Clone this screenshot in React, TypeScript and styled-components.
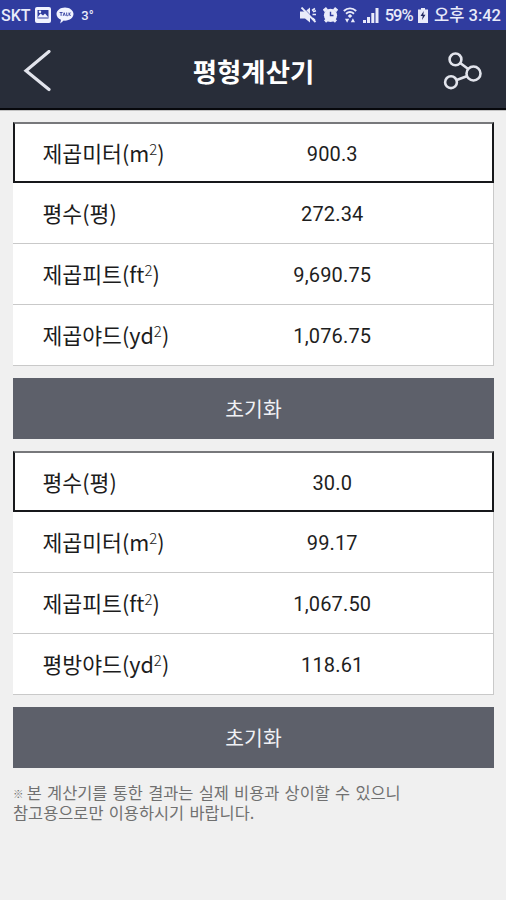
import React from 'react';
import styled, { createGlobalStyle } from 'styled-components';

const GlobalStyle = createGlobalStyle`
  * { box-sizing: border-box; }
  body {
    margin: 0;
    background: #f0f0f0;
    font-family: Roboto, 'Noto Sans CJK KR', sans-serif;
  }
`;

const Screen = styled.div`
  width: 506px;
  height: 900px;
  overflow: hidden;
  background: #f0f0f0;
`;

const StatusBar = styled.div`
  height: 30px;
  padding: 0 5px 0 1px;
  display: flex;
  align-items: center;
  justify-content: space-between;
  background: #303c9f;
  color: #e9ebfa;
  white-space: nowrap;
`;

const StatusGroup = styled.div<{ $gap: number }>`
  display: flex;
  align-items: center;
  gap: ${({ $gap }) => $gap}px;
  svg { display: block; flex: none; }
`;

const StatusText = styled.span<{ $size?: number; $spacing?: number }>`
  font-size: ${({ $size = 16.5 }) => $size}px;
  font-weight: 500;
  letter-spacing: ${({ $spacing = 0 }) => $spacing}px;
  line-height: 30px;
  padding-top: 1px;
`;

const Header = styled.header`
  height: 80px;
  padding: 3px 21px 0 23px;
  display: grid;
  grid-template-columns: 42px 1fr 42px;
  align-items: center;
  background: #282d39;
  border-bottom: 2px solid #07080c;
  box-shadow: 0 1px 0 #c2c2c2;
  svg { display: block; }
`;

const Title = styled.h1`
  margin: 0;
  padding-right: 1px;
  text-align: center;
  color: #fff;
  font: 700 26.4px/36px 'Noto Sans CJK KR', sans-serif;
`;

const IconButton = styled.button`
  padding: 0;
  border: 0;
  background: none;
  color: #e2e4ec;
`;

const Content = styled.main`
  padding: 12px 12px 0 13px;
  display: flex;
  flex-direction: column;
  gap: 12px;
`;

const Card = styled.section`
  height: 244px;
  display: grid;
  grid-template-rows: repeat(4, 61px);
  background: #fff;
`;

const Row = styled.div<{ $active?: boolean }>`
  display: grid;
  grid-template-columns: 164px 1fr;
  align-items: center;
  padding-left: ${({ $active }) => ($active ? 27.5 : 29.5)}px;
  border: 0 solid #c9c9c9;
  border-width: 0 1px 1px 0;
  ${({ $active }) =>
    $active && 'border: 2px solid #17181b; border-top-color: #77787b;'}
`;

const Label = styled.span`
  color: #1c1c1c;
  font: 400 21.6px/30px 'Noto Sans CJK KR', sans-serif;
  white-space: nowrap;
`;

const Power = styled.sup`
  font-size: 15px;
  font-weight: 300;
  line-height: 0;
  vertical-align: 7px;
`;

const Value = styled.span<{ $active?: boolean }>`
  color: #1e1e1e;
  font-size: 20px;
  line-height: 28px;
  letter-spacing: 0.15px;
  text-align: center;
  padding: 2px ${({ $active }) => ($active ? 34 : 35)}px 0 0;
`;

const ResetButton = styled.button`
  height: 61px;
  border: 0;
  padding: 0 0 2px;
  background: #5d606a;
  color: #f0f1f5;
  font: 400 20.4px/30px 'Noto Sans CJK KR', sans-serif;
`;

const Note = styled.p`
  margin: 2px 0 0;
  color: #707070;
  font: 400 16.4px/20px 'Noto Sans CJK KR', sans-serif;
  word-spacing: 1.6px;
  white-space: nowrap;
`;

const NoteMark = styled.span`
  font-size: 10.5px;
  line-height: 0;
  vertical-align: 1px;
  margin-right: -2px;
`;

interface Measure {
  name: string;
  unit: string;
  squared?: boolean;
  value: string;
}

const fromMeters: Measure[] = [
  { name: '제곱미터', unit: 'm', squared: true, value: '900.3' },
  { name: '평수', unit: '평', value: '272.34' },
  { name: '제곱피트', unit: 'ft', squared: true, value: '9,690.75' },
  { name: '제곱야드', unit: 'yd', squared: true, value: '1,076.75' },
];

const fromPyeong: Measure[] = [
  { name: '평수', unit: '평', value: '30.0' },
  { name: '제곱미터', unit: 'm', squared: true, value: '99.17' },
  { name: '제곱피트', unit: 'ft', squared: true, value: '1,067.50' },
  { name: '평방야드', unit: 'yd', squared: true, value: '118.61' },
];

const PictureIcon = () => (
  <svg width="16" height="16" viewBox="0 0 16 16">
    <rect width="16" height="16" rx="2" fill="#f1f3ff" />
    <path d="M2.500 3h11v8.500h-11z" fill="#303c9f" />
    <path d="M2.500 10.500l3-4 2.500 2 2-2 3.500 4z" fill="#f1f3ff" />
    <circle cx="5" cy="4.800" r="1.200" fill="#f1f3ff" />
  </svg>
);

const TalkIcon = () => (
  <svg width="18" height="17" viewBox="0 0 18 17">
    <path d="M9 .5c4.700 0 8.500 2.900 8.500 6.600S13.700 13.700 9 13.700l-1.300-.1L4.200 16.500l.8-3.700C2.300 11.700.5 9.600.5 7.100.5 3.400 4.300.5 9 .5z" fill="#f1f3ff" />
    <path d="M3.600 5.500h3M5.100 5.500v3.400M7.200 8.900l1-3.200 1.100 3.200M10.700 5.500v3.200h1.200M13 5.500v3.400M14.500 5.600L13.300 7l1.300 1.800" fill="none" stroke="#303c9f" strokeWidth=".9" />
  </svg>
);

const MuteIcon = () => (
  <svg width="17" height="16" viewBox="0 0 17 16">
    <path d="M0 4.500h5l5-4v15l-5-4H0z" fill="currentColor" />
    <path d="M3 .5l13 13.500" stroke="#303c9f" strokeWidth="1" />
    <path d="M1.500 .5l14 14.500" stroke="currentColor" strokeWidth="1.800" />
    <path d="M12 3.500l3-2M12.500 7.500H16M13 4.800l3-1M12.500 11l2.500 2" stroke="currentColor" strokeWidth="1.600" />
  </svg>
);

const AlarmIcon = () => (
  <svg width="15" height="16" viewBox="0 0 15 16">
    <path d="M.8 4L4 1.200M14.200 4L11 1.200M2 14.500l3-2.500M13 14.500l-3-2.500" stroke="currentColor" strokeWidth="3.200" />
    <circle cx="7.500" cy="8.300" r="6.600" fill="currentColor" />
    <path d="M7.500 4.800v3.700h3" fill="none" stroke="#303c9f" strokeWidth="1.400" />
  </svg>
);

const WifiIcon = () => (
  <svg width="14" height="16" viewBox="0 0 14 16">
    <path d="M.8 4c3.700-3.300 8.700-3.300 12.400 0M3 6.700c2.500-2.100 5.500-2.100 8 0" fill="none" stroke="currentColor" strokeWidth="1.900" />
    <path d="M7 7l2.300 2L7 11 4.700 9zM2 11.700h4.200L4.100 15.800zM7.800 15.300H12l-2.100-4.100z" fill="currentColor" />
  </svg>
);

const SignalIcon = () => (
  <svg width="16" height="15" viewBox="0 0 16 15">
    <path d="M0 12h3v3H0zM4 9h3v6H4zM8.300 5h3v10h-3zM12.500 0h3v15h-3z" fill="currentColor" />
  </svg>
);

const BatteryIcon = () => (
  <svg width="10" height="15" viewBox="0 0 10 15">
    <path d="M3 0h4v1.500h3V15H0V1.500h3z" fill="currentColor" />
    <path d="M5.800 3L2.500 8h2.200L4 12l3.500-5.300H5.300z" fill="#20275f" />
  </svg>
);

const BackIcon = () => (
  <svg width="30" height="42" viewBox="0 0 30 42">
    <path d="M26 1.500L3 20.700 26 39.500" fill="none" stroke="currentColor" strokeWidth="3.200" strokeLinecap="round" />
  </svg>
);

const ShareIcon = () => (
  <svg width="40" height="38" viewBox="0 0 40 38">
    <g fill="none" stroke="currentColor" strokeWidth="2.600">
      <circle cx="12.500" cy="7.400" r="5.900" />
      <circle cx="30.500" cy="21.500" r="7" />
      <circle cx="8" cy="30.200" r="5.900" />
      <path d="M17.200 11l8 6M13.700 28l10-3.800" />
    </g>
  </svg>
);

const Converter = ({ rows }: { rows: Measure[] }) => (
  <>
    <Card>
      {rows.map((row, index) => (
        <Row key={row.name} $active={index === 0}>
          <Label>
            {row.name}({row.unit}
            {row.squared && <Power>2</Power>})
          </Label>
          <Value $active={index === 0}>{row.value}</Value>
        </Row>
      ))}
    </Card>
    <ResetButton>초기화</ResetButton>
  </>
);

export default function App() {
  return (
    <Screen>
      <GlobalStyle />
      <StatusBar>
        <StatusGroup $gap={4.5}>
          <StatusText $size={16}>SKT</StatusText>
          <PictureIcon />
          <TalkIcon />
          <StatusText $size={13}>&nbsp;3°</StatusText>
        </StatusGroup>
        <StatusGroup $gap={5.6}>
          <MuteIcon />
          <AlarmIcon />
          <WifiIcon />
          <SignalIcon />
          <StatusText $spacing={-0.9}>59%</StatusText>
          <BatteryIcon />
          <StatusText>오후 3:42</StatusText>
        </StatusGroup>
      </StatusBar>
      <Header>
        <IconButton aria-label="뒤로"><BackIcon /></IconButton>
        <Title>평형계산기</Title>
        <IconButton aria-label="공유"><ShareIcon /></IconButton>
      </Header>
      <Content>
        <Converter rows={fromMeters} />
        <Converter rows={fromPyeong} />
        <Note>
          <NoteMark>※</NoteMark> 본 계산기를 통한 결과는 실제 비용과 상이할 수 있으니
          <br />
          참고용으로만 이용하시기 바랍니다.
        </Note>
      </Content>
    </Screen>
  );
}
